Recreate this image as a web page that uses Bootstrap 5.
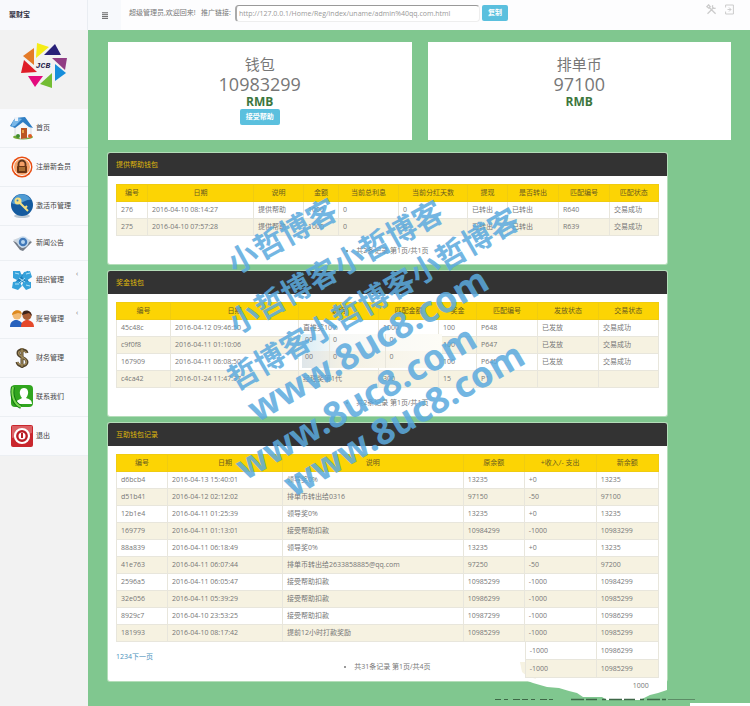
<!DOCTYPE html>
<html lang="zh-CN">
<head>
<meta charset="utf-8">
<meta name="viewport" content="width=device-width, initial-scale=1">
<title>聚财宝</title>
<link href="https://cdn.jsdelivr.net/npm/bootstrap@5.3.0/dist/css/bootstrap.min.css" rel="stylesheet">
<style>
body{font-family:"Open Sans","Noto Sans CJK SC",sans-serif;font-size:7px;line-height:10px;color:#777;background:#f2f2f2}
.topbar{height:30px;background:#fdfdfe}
.brand{width:88px;padding-left:9px;background:#f8f9fc;color:#334;text-decoration:none;border-right:1px solid #e9edf2}
.toggle{width:33px;background:#f7f9fc;border:0;padding:0}
.linkbox{width:245px;height:17px;border:1px solid #eee;border-top:1px solid #999;border-left:2px solid #aaa;border-radius:4px;padding:0 2px;color:#999;background:#fff}
.btn-mini{--bs-btn-padding-x:6px;--bs-btn-padding-y:3px;--bs-btn-font-size:7px;--bs-btn-line-height:10px;--bs-btn-border-radius:2px;--bs-btn-color:#fff;--bs-btn-bg:#5bc0de;--bs-btn-border-width:0;font-weight:700}
.topbar .btn-mini{margin-left:2px}
.side{width:88px;background:#f2f2f2}
.logo-area{height:79px;padding-right:1px}
.side a{height:39px;padding-left:10px;gap:2px;background:#f9fafd;border-bottom:1px solid #eceff3;color:#444;text-decoration:none}
.side a.short{height:35px}
.side svg{flex:none}
.caret{padding-right:10px;padding-bottom:12px;color:#777}
.stage{background:#80c78f;padding:12px 19px 24px 20px;min-width:0}
.purse{height:98px;padding-top:12px;background:#fff}
.purse h2{font-size:15px;line-height:20px;margin:0;font-weight:400}
.purse .sum{font-size:18px;line-height:20px}
.purse .cur{font-size:12px;line-height:15px;font-weight:700;color:#3c763d}
.panels{width:90%;gap:7px;margin-top:13px;padding-right:2px}
.pane{background:#fff;border-radius:2px;box-shadow:0 0 0 1px #b4deb9}
.pane h3{margin:0;height:23px;padding:0 8px;background:#333;color:#dfb60c;font-size:7px;line-height:23px;font-weight:400;border-radius:2px 2px 0 0}
.pane-in{padding:8px}
.grid{width:100%;table-layout:fixed;border-collapse:collapse;white-space:nowrap}
.grid th,.grid td{height:17px;padding:0 4px;line-height:10px;border:1px solid #e8e6dc}
.grid th{background:#fcd404;border-color:#f0cc10;text-align:center;font-weight:400;color:#6a5c20}
.grid tbody tr:nth-child(even){background:#f6f2e1}
.helps th:nth-child(1){width:31px}.helps th:nth-child(2){width:106px}.helps th:nth-child(3){width:50px}.helps th:nth-child(4){width:35px}.helps th:nth-child(5){width:60px}.helps th:nth-child(6){width:69px}.helps th:nth-child(7){width:40px}.helps th:nth-child(8),.helps th:nth-child(9){width:51px}
.bonus th:nth-child(1){width:54px}.bonus th:nth-child(2){width:128px}.bonus th:nth-child(3){width:80px}.bonus th:nth-child(4){width:60px}.bonus th:nth-child(5){width:38px}.bonus th:nth-child(6),.bonus th:nth-child(7){width:61px}
.logs th:nth-child(1){width:51px}.logs th:nth-child(2){width:115px}.logs th:nth-child(4){width:61px}.logs th:nth-child(5){width:72px}.logs th:nth-child(6){width:62px}
.pages{padding:10px 0 0;margin:0;list-style-position:inside;text-align:center}
.pages.tight{padding:0 0 1px}
.jump{padding-top:10px}
.jump a{color:#4b93bd;text-decoration:none}
.patch{left:194px;top:40px;width:140px;background:linear-gradient(90deg,#d8edf7,#f7f8f6 25%,#fdfcf6)}
.patch div{height:17px;line-height:12px}
.patch div+div{background:linear-gradient(90deg,#dfe6ea,#f4f1e4 30%,#fbf9f1)}
.patch span{width:28px;padding-left:3px}.patch span+span{width:59px;border-left:1px solid #e8e6dc}
.smear{right:-1px;top:194px}
.tail-rows{right:8px;top:195px;width:134px}
.tail-rows td:last-child{width:62px}
.tail-rows .grid td{height:18px}
.tail-last{padding:3px 10px 0 0;text-align:right}
.foot-marks{right:0;bottom:0}
.stamp{left:220px;top:190px;pointer-events:none;overflow:visible}
.stamp text{font-family:"Noto Sans","Noto Sans CJK SC",sans-serif;fill:#5baade;font-weight:700}
</style>
<script src="https://cdn.jsdelivr.net/npm/bootstrap@5.3.0/dist/js/bootstrap.bundle.min.js"></script>
</head>
<body>
<div class="position-relative min-vh-100 d-flex flex-column overflow-hidden">
<header class="topbar d-flex align-items-stretch">
  <a href="#" class="brand d-flex align-items-center fw-bold">聚财宝</a>
  <button class="toggle" type="button" aria-label="菜单"><svg width="6" height="7" viewBox="0 0 6 7" stroke="#555"><path d="M0 .8h6M0 2.7h6M0 4.6h6M0 6.4h6" stroke-width=".9"/></svg></button>
  <div class="d-flex align-items-center flex-grow-1 ps-2 pb-1">
    <label for="ref" class="me-1">超级管理员,欢迎回来!&nbsp;&nbsp; 推广链接:</label>
    <input id="ref" class="linkbox" value="http://127.0.0.1/Home/Reg/index/uname/admin%40qq.com.html">
    <button type="button" class="btn btn-mini">复制</button>
  </div>
  <div class="d-flex gap-2 pt-1 pe-3">
    <a href="#" aria-label="设置"><svg width="11" height="11" viewBox="0 0 11 11" fill="none" stroke="#ccc" stroke-width="1.3"><path d="M1.5 9.8 7 4.3M9.6 9.8 3.5 3.7M6.8 1.2c-1 2 .6 3.8 2.8 2.9M.8 2.6 2.6.8l1.6 2-1.4 1.4z"/></svg></a>
    <a href="#" aria-label="退出"><svg width="9" height="11" viewBox="0 0 9 11" fill="none" stroke="#ccc"><path d="M.6 3.5V1h7.8v9H.6V7.5M2.500 5.500H6M4 3.5l2 2-2 2"/></svg></a>
  </div>
</header>
<div class="d-flex flex-grow-1">
  <nav class="side flex-shrink-0">
    <div class="logo-area d-flex justify-content-center pt-2">
      <svg width="48" height="56" viewBox="20 38 48 56">
        <path fill="#f5ec16" d="M37 43l12 4-13 11z"/><path fill="#282078" d="M55 44l6 11H44z"/><path fill="#913d84" d="M52 58h15l-2 12z"/><path fill="#168edb" d="M55 64l11 9-11 8z"/><path fill="#73bd33" d="M52 73v15l-12-4z"/><path fill="#e40b7d" d="M28 76h15l-8 11z"/><path fill="#df1d28" d="M24 60l13 12-16 1z"/><path fill="#e47b28" d="M34 48v17l-11-9z"/>
        <text x="43" y="68" font-size="8" font-family="Liberation Mono" font-style="italic" font-weight="700" text-anchor="middle" fill="#26224a">JCB</text>
      </svg>
    </div>
    <a href="#" class="d-flex align-items-center"><svg width="24" height="24" viewBox="0 0 24 24"><ellipse cx="13" cy="21" rx="10" ry="2.500" fill="#75a936"/><path fill="#f5f6f8" stroke="#b9bfc9" stroke-width=".5" d="M5 10l7-5 9 7v9l-10 2-6-4z"/><path fill="#2f7ec4" d="M0 10 5 2l10-1 8 11-4-1-6-5-8 6z"/><path fill="#79b7e8" d="M3 5l5-3 4 1-7 7-4 1z"/><path fill="#eef3fa" d="M4 1h4v4H5z"/><path fill="#bb5522" d="M11 12h6v10l-6 1z"/><path fill="#e9a54d" d="M12 14h2v3h-2z"/><circle cx="8" cy="20" r="2" fill="#3f8d2e"/><circle cx="20" cy="20" r="2" fill="#e05b24"/></svg><span>首页</span></a>
    <a href="#" class="d-flex align-items-center"><svg width="24" height="24" viewBox="0 0 24 24"><circle cx="12" cy="12" r="10.500" fill="#e94e12"/><circle cx="12" cy="12" r="8.500" fill="#f5a067" stroke="#fff" stroke-width="1"/><path d="M8.500 12V9a3.500 3.500 0 0 1 7 0v3" fill="none" stroke="#5d351b" stroke-width="1.800"/><rect x="7" y="11" width="10" height="7" rx="1" fill="#6b3514"/><path d="M9 13h6M9 15h6" stroke="#e8a852"/></svg><span>注册新会员</span></a>
    <a href="#" class="d-flex align-items-center"><svg width="24" height="26" viewBox="0 0 24 26"><ellipse cx="12" cy="23" rx="8" ry="2" fill="#bcc9d4"/><circle cx="12" cy="12" r="11" fill="#155b9f"/><path fill="#4f9bd3" d="M2 10a10 10 0 0 1 19-3C15 5 9 15 2 10z"/><circle cx="8" cy="8" r="2.500" fill="#f4df82" stroke="#f4df82" stroke-width="2"/><circle cx="7.500" cy="7.500" r="1" fill="#3d7fb8"/><path d="m10 10 8 8m-3-3 2-2" stroke="#f4df82" stroke-width="2"/></svg><span>激活币管理</span></a>
    <a href="#" class="short d-flex align-items-center"><svg width="24" height="24" viewBox="0 0 24 24"><path fill="#757c87" d="M3 10l4 1 5 6 8-7 2 1-9 9-3-1z"/><path fill="#cfd6dd" d="M3 9l8-3 10 3-8 8z"/><circle cx="13" cy="11" r="5" fill="#4178b8" stroke="#c5d9ec" stroke-width="1.500"/><circle cx="13" cy="11" r="2" fill="#b5d5f0"/></svg><span>新闻公告</span></a>
    <a href="#" class="d-flex align-items-center"><svg width="24" height="24" viewBox="0 0 24 24"><path d="M5 6q7 2 14 12M19 5q-7 3-14 14" stroke="#1d7fbb" stroke-width="5"/><path fill="#36a2db" d="M3 3h7l2 5-5 4-4-2zM14 4l6-1 2 6-6 4-4-4zM3 14l6-1 3 5-4 4-6-2zM14 13l7 1v6l-5 2-4-5z"/><path fill="none" stroke="#b0e1f7" stroke-width="1" d="M5 5l4 1M16 6l4-1M5 16l4 0M16 17l4 1M9 10l6 4M15 10l-6 5"/></svg><span>组织管理</span><span class="caret ms-auto">‹</span></a>
    <a href="#" class="d-flex align-items-center"><svg width="24" height="24" viewBox="0 0 24 24"><path fill="#2862bd" d="M0 20c0-5 3-7 6-7s7 2 7 7z"/><path fill="#e5482b" d="M11 20c0-5 3-7 6-7s7 2 7 7z"/><circle cx="7" cy="8" r="4.500" fill="#f2bb75"/><path fill="#dd8a20" d="M2 8c0-5 9-7 10-1L8 6z"/><circle cx="17" cy="8.500" r="4.500" fill="#a85d35"/><path fill="#3d241b" d="M12 8c0-6 9-6 10 1l-3-3z"/></svg><span>账号管理</span><span class="caret ms-auto">‹</span></a>
    <a href="#" class="d-flex align-items-center"><svg width="24" height="24" viewBox="0 0 24 24" fill="none"><path d="M17 7c-1-4-9-4-9 0 0 5 9 4 9 9 0 5-9 5-10 0M12 2v20" stroke="#51432c" stroke-width="3"/><path d="M16.500 7c-1-3-8-3-8 0 0 4 8 4 8 9 0 4-8 4-9 0M12 2v19" stroke="#a58e5c" stroke-width="1.200"/></svg><span>财务管理</span></a>
    <a href="#" class="d-flex align-items-center"><svg width="24" height="26" viewBox="0 0 24 26"><rect x="1" y="1" width="22" height="22" rx="4" fill="#31a51f"/><path fill="#fff" d="M6 20c0-4 3-4 6-6-4-5-2-10 2-10s6 5 2 10c3 1 6 2 6 6z"/><path d="M3 3C1 11 4 20 11 23" fill="none" stroke="#107513" stroke-width="4"/><path d="M3 3C1 11 4 20 11 23" fill="none" stroke="#7bd84f" stroke-width="2"/></svg><span>联系我们</span></a>
    <a href="#" class="d-flex align-items-center"><svg width="24" height="24" viewBox="0 0 24 24"><rect x="1" y="1" width="22" height="22" rx="2" fill="#c9262d"/><path fill="#e8898b" d="M2 2h20v7L2 14z" opacity=".6"/><circle cx="12" cy="12" r="7" fill="#b91c24" stroke="#fff" stroke-width="2.200"/><circle cx="12" cy="12" r="3.500" fill="#fff"/><path d="M12 9v5" stroke="#b91c24" stroke-width="2"/></svg><span>退出</span></a>
  </nav>
  <main class="stage flex-grow-1">
    <div class="row gx-3">
      <div class="col-6"><section class="purse text-center"><h2>钱包</h2><div class="sum">10983299</div><div class="cur">RMB</div><button type="button" class="btn btn-mini d-block mx-auto">接受帮助</button></section></div>
      <div class="col-6"><section class="purse text-center"><h2>排单币</h2><div class="sum">97100</div><div class="cur">RMB</div></section></div>
    </div>
    <div class="panels d-flex flex-column">
      <section class="pane"><h3>提供帮助钱包</h3><div class="pane-in">
        <table class="grid helps"><thead><tr><th>编号</th><th>日期</th><th>说明</th><th>金额</th><th>当前总利息</th><th>当前分红天数</th><th>提现</th><th>是否转出</th><th>匹配编号</th><th>匹配状态</th></tr></thead>
        <tbody><tr><td>276</td><td>2016-04-10 08:14:27</td><td>提供帮助</td><td>1000</td><td>0</td><td>0</td><td>已转出</td><td>已转出</td><td>R640</td><td>交易成功</td></tr>
        <tr><td>275</td><td>2016-04-10 07:57:28</td><td>提供帮助</td><td>1000</td><td>0</td><td>0</td><td>已转出</td><td>已转出</td><td>R639</td><td>交易成功</td></tr></tbody></table>
        <ul class="pages"><li>共2条记录 第1页/共1页</li></ul></div></section>
      <section class="pane"><h3>奖金钱包</h3><div class="pane-in position-relative">
        <table class="grid bonus"><thead><tr><th>编号</th><th>日期</th><th>说明</th><th>匹配金额</th><th>奖金</th><th>匹配编号</th><th>发放状态</th><th>交易状态</th></tr></thead>
        <tbody><tr><td>45c48c</td><td>2016-04-12 09:46:50</td><td>直推奖10%</td><td>1000</td><td>100</td><td>P648</td><td>已发放</td><td>交易成功</td></tr>
        <tr><td>c9f0f8</td><td>2016-04-11 01:10:06</td><td></td><td></td><td>100</td><td>P647</td><td>已发放</td><td>交易成功</td></tr>
        <tr><td>167909</td><td>2016-04-11 06:08:50</td><td></td><td></td><td>100</td><td>P645</td><td>已发放</td><td>交易成功</td></tr>
        <tr><td>c4ca42</td><td>2016-01-24 11:47:37</td><td>经理奖第1代</td><td>300</td><td>15</td><td>P1</td><td></td><td></td></tr></tbody></table>
        <div class="patch position-absolute"><div class="d-flex"><span>00</span><span>0</span><span>0</span></div><div class="d-flex"><span>00</span><span>0</span><span>0</span></div></div>
        <ul class="pages"><li>共2条记录 第1页/共1页</li></ul></div></section>
      <section class="pane"><h3>互助钱包记录</h3><div class="pane-in position-relative">
        <table class="grid logs"><thead><tr><th>编号</th><th>日期</th><th>说明</th><th>原余额</th><th>+收入/- 支出</th><th>新余额</th></tr></thead>
        <tbody><tr><td>d6bcb4</td><td>2016-04-13 15:40:01</td><td>领导奖0%</td><td>13235</td><td>+0</td><td>13235</td></tr>
        <tr><td>d51b41</td><td>2016-04-12 02:12:02</td><td>排单币转出给0316</td><td>97150</td><td>-50</td><td>97100</td></tr>
        <tr><td>12b1e4</td><td>2016-04-11 01:25:39</td><td>领导奖0%</td><td>13235</td><td>+0</td><td>13235</td></tr>
        <tr><td>169779</td><td>2016-04-11 01:13:01</td><td>接受帮助扣款</td><td>10984299</td><td>-1000</td><td>10983299</td></tr>
        <tr><td>88a839</td><td>2016-04-11 06:18:49</td><td>领导奖0%</td><td>13235</td><td>+0</td><td>13235</td></tr>
        <tr><td>41e763</td><td>2016-04-11 06:07:44</td><td>排单币转出给2633858885@qq.com</td><td>97250</td><td>-50</td><td>97200</td></tr>
        <tr><td>2596a5</td><td>2016-04-11 06:05:47</td><td>接受帮助扣款</td><td>10985299</td><td>-1000</td><td>10984299</td></tr>
        <tr><td>32e056</td><td>2016-04-11 05:39:29</td><td>接受帮助扣款</td><td>10986299</td><td>-1000</td><td>10985299</td></tr>
        <tr><td>8929c7</td><td>2016-04-10 23:53:25</td><td>接受帮助扣款</td><td>10987299</td><td>-1000</td><td>10986299</td></tr>
        <tr><td>181993</td><td>2016-04-10 08:17:42</td><td>提前12小时打款奖励</td><td>10985299</td><td>-1000</td><td>10985299</td></tr></tbody></table>
        <div class="jump"><a href="#">1</a><a href="#">2</a><a href="#">3</a><a href="#">4</a><a href="#">下一页</a></div>
        <ul class="pages tight"><li>共31条记录 第1页/共4页</li></ul>
        <svg class="smear position-absolute" width="148" height="62" viewBox="520 638 148 62"><path fill="#fff" d="M525 660V678l8 3 14 4 12 1 10 3 8 2 6 4h19l5 3h33l10-5 8-2 9-3V650z"/><path fill="#f6f2e1" d="M530 660h-10l2 10q4 4 14 7z"/></svg>
        <div class="tail-rows position-absolute"><table class="grid"><tbody><tr><td>-1000</td><td>10986299</td></tr><tr><td>-1000</td><td>10985299</td></tr></tbody></table><div class="tail-last">1000</div></div>
      </div></section>
    </div>
  </main>
</div>
<svg class="foot-marks position-absolute" width="260" height="10" viewBox="490 696 260 10"><path d="M495 699.500h58" stroke="#3e6747" stroke-dasharray="6 3 4 5 7 2"/><path d="M571 699.500h95" stroke="#3e6747" stroke-width="1.500" stroke-dasharray="13 2 11 5 4 3"/><path d="M668 699.500h27" stroke="#5c8c66"/><path fill="#fff" d="M690 703h60v3h-60z"/></svg>
<svg class="stamp position-absolute" width="330" height="320" viewBox="220 190 330 320">
  <g opacity=".85" font-size="30">
    <text transform="translate(235 275) rotate(-29)">小哲博客</text>
    <text transform="translate(236 335) rotate(-29)">小哲博客小哲博客</text>
    <text transform="translate(236 391) rotate(-30)">哲博客小哲博客小哲博客</text>
    <g font-size="36"><text transform="translate(257 423) rotate(-30)">www.8uc8.com</text><text transform="translate(245 481) rotate(-30)">www.8uc8.com</text><text transform="translate(293 498) rotate(-30)">www.8uc8.com</text></g>
  </g>
</svg>
</div>
</body>
</html>
